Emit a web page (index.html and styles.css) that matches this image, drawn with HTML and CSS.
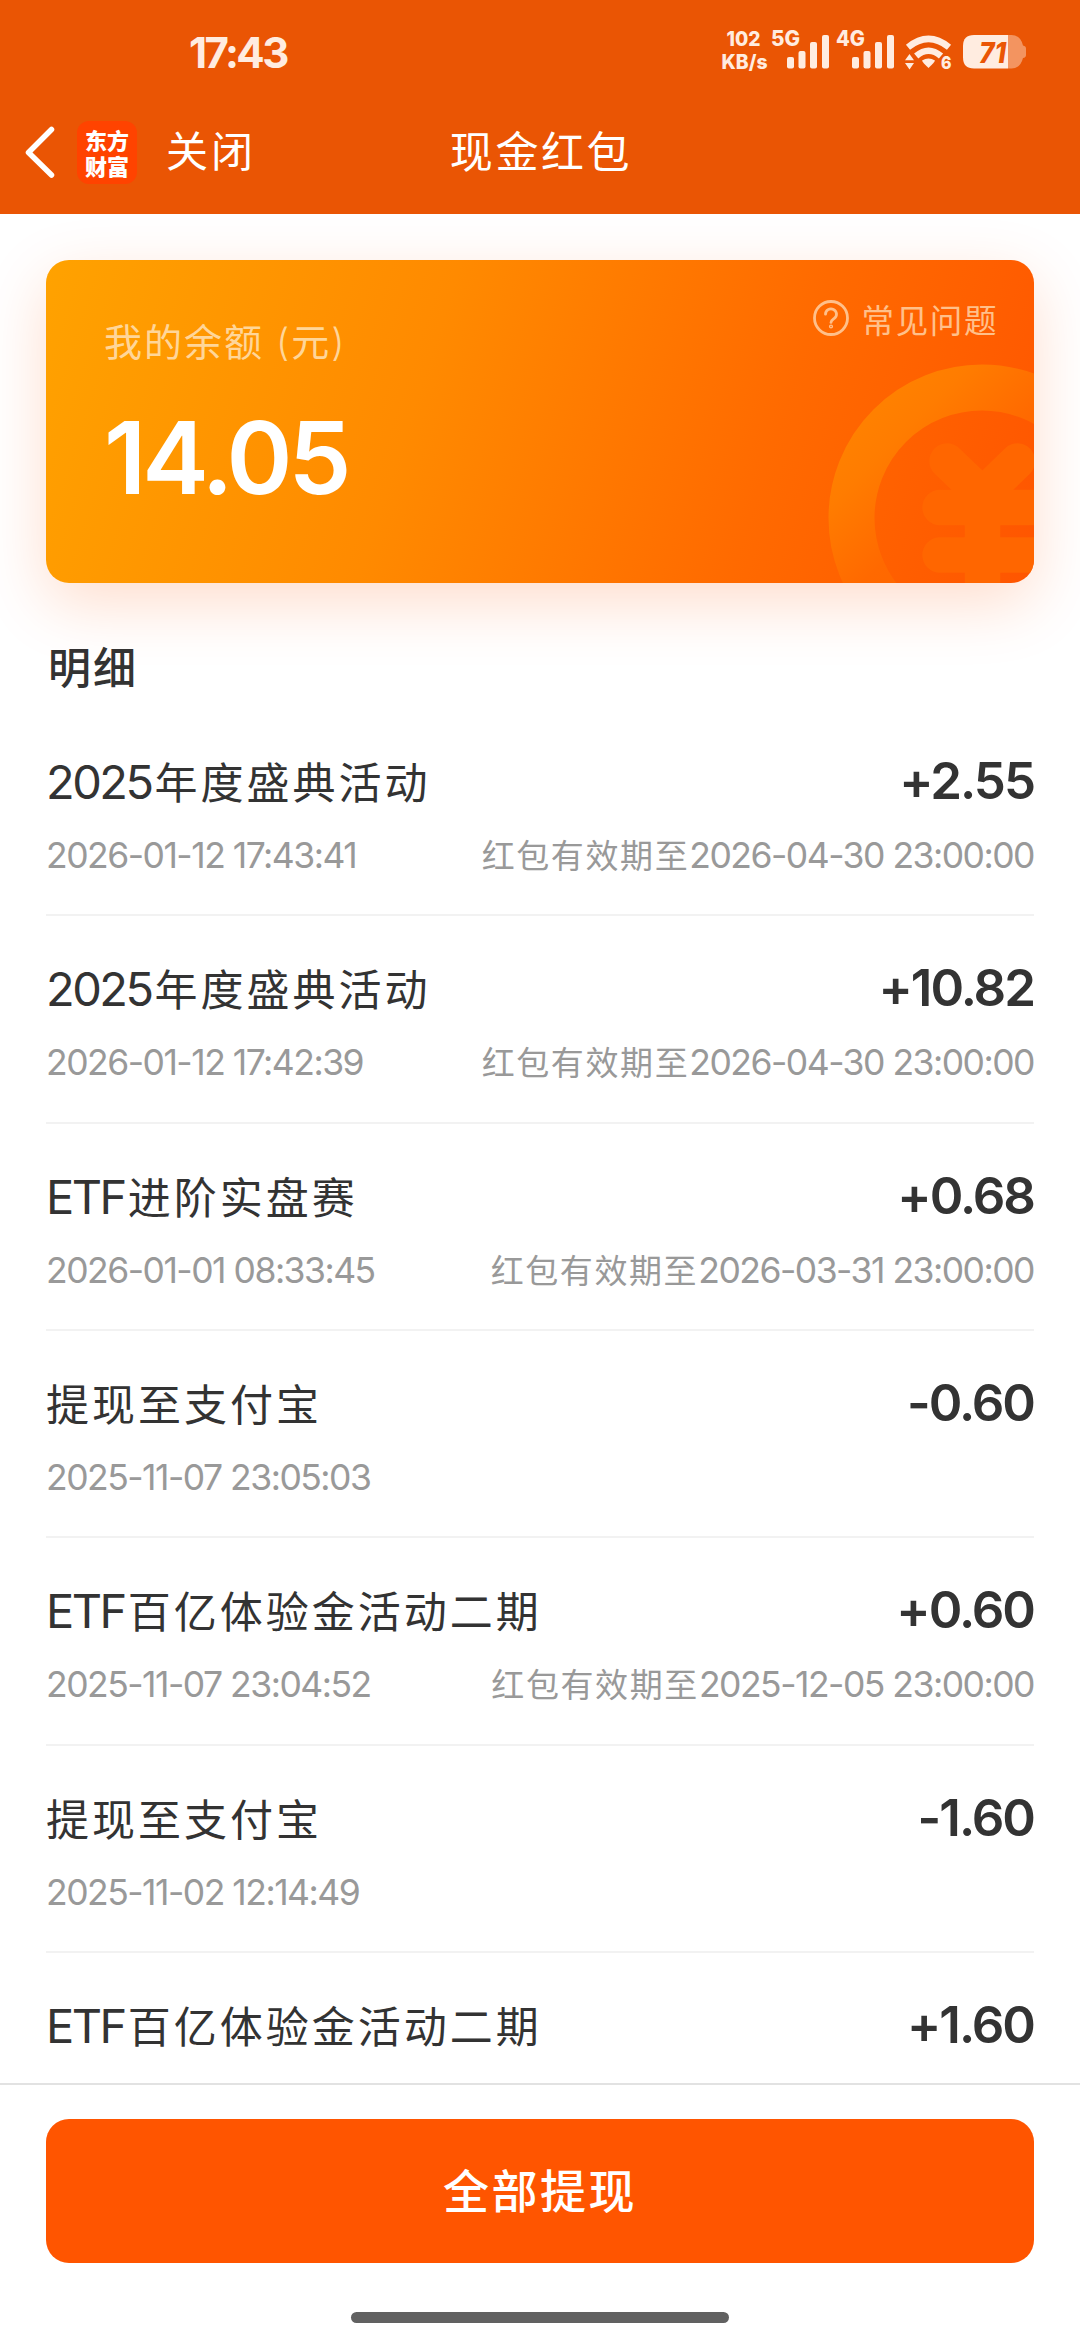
FILE: index.html
```html
<!DOCTYPE html>
<html lang="zh-CN">
<head>
<meta charset="utf-8">
<title>现金红包</title>
<link rel="stylesheet" href="styles.css">
</head>
<body>
<div class="screen">
  <header class="top">
    <div class="status">
      <span class="clock">17:43</span>
      <svg class="indicators" width="310" height="44" viewBox="720 30 310 44" fill="#ffece0">
        <g class="ind-text">
          <text x="726.5" y="46" font-size="20.5" textLength="34" lengthAdjust="spacingAndGlyphs">102</text>
          <text x="721.5" y="69" font-size="19.5" textLength="46" lengthAdjust="spacingAndGlyphs">KB/s</text>
          <text x="771" y="46" font-size="21" textLength="29" lengthAdjust="spacingAndGlyphs">5G</text>
          <text x="836" y="46" font-size="21" textLength="29" lengthAdjust="spacingAndGlyphs">4G</text>
          <text x="941" y="69" font-size="18" textLength="10.5" lengthAdjust="spacingAndGlyphs">6</text>
        </g>
        <g id="bars">
          <rect x="787" y="57" width="7" height="11.5" rx="2"/>
          <rect x="798.5" y="51" width="7" height="17.5" rx="2"/>
          <rect x="810" y="42" width="7" height="26.5" rx="2"/>
          <rect x="822" y="35" width="7" height="33.5" rx="2"/>
        </g>
        <use href="#bars" x="65"/>
        <g fill="none" stroke="#ffece0" stroke-width="6.5">
          <path d="M908 47.2Q928.500 30.500 949 47.200"/>
          <path d="M916.200 56Q928.500 45.500 941 56"/>
        </g>
        <path d="M922 60.500q6.500-4 13 0q-.2 1.500-6.500 7.500q-6.300-6-6.500-7.500z"/>
        <path d="M909.500 54l4.500 6.300h-9zM909.500 69.500l4.500-6.500h-9z"/>
        <path d="M974 35h34v33.500h-34q-11 0-11-11v-11.500q0-11 11-11z"/>
        <path d="M1008 35h3.500q9 0 11.500 10.500q3 .5 3 3v6.500q0 2.500-3 3q-2.500 10.500-11.500 10.500h-3.500z" opacity=".42"/>
        <text class="batt" x="979" y="62.500" font-size="28" textLength="27" lengthAdjust="spacingAndGlyphs">71</text>
      </svg>
    </div>
    <nav class="nav">
      <div class="nav-left">
        <svg class="back" width="32" height="54" viewBox="0 0 32 54" fill="none" stroke="#fff" stroke-width="5.500" stroke-linecap="round" stroke-linejoin="round"><path d="M27.500 4.500L4.500 27.500L27.500 50"/></svg>
        <div class="logo"><span>东方</span><span>财富</span></div>
        <span class="close">关闭</span>
      </div>
      <h1 class="title">现金红包</h1>
      <div></div>
    </nav>
  </header>

  <main class="content">
    <section class="card">
      <svg class="coin" width="206" height="219" viewBox="828 364 206 219">
        <defs>
          <linearGradient id="ring" gradientUnits="userSpaceOnUse" x1="880" y1="410" x2="1010" y2="540">
            <stop offset="0" stop-color="#ff8000"/>
            <stop offset=".18" stop-color="#ff7c00"/>
            <stop offset=".6" stop-color="#ff6900"/>
            <stop offset="1" stop-color="#ff6400"/>
          </linearGradient>
        </defs>
        <circle cx="982" cy="518" r="130.500" fill="none" stroke="url(#ring)" stroke-width="46"/>
        <path d="M947 461l35.500 34l35-34M982.500 495v100M940 507.500h110M940 555h110" fill="none" stroke="#ff6600" stroke-width="35.500" stroke-linecap="round"/>
      </svg>
      <div class="balance">
        <div class="label">我的余额<span class="paren open">(</span>元<span class="paren">)</span></div>
        <div class="sum">14.05</div>
      </div>
      <a class="faq">
        <svg width="38" height="38" viewBox="0 0 38 38" fill="none" stroke="#ffc08a" stroke-width="2.800" stroke-linecap="round"><circle cx="19" cy="19" r="16.500"/><path d="M13.500 15.200a5.500 5.300 0 1 1 8.800 4.200c-2 1.500-3.300 2-3.300 4"/><circle cx="19" cy="27.500" r=".7"/></svg>
        <span>常见问题</span>
      </a>
    </section>

    <h2 class="heading">明细</h2>
    <ul class="list">
      <li><div class="line"><span class="name"><b>2025</b>年度盛典活动</span><span class="amount">+2.55</span></div><div class="meta"><b>2026-01-12 17:43:41</b><span>红包有效期至<b>2026-04-30 23:00:00</b></span></div></li>
      <li><div class="line"><span class="name"><b>2025</b>年度盛典活动</span><span class="amount">+10.82</span></div><div class="meta"><b>2026-01-12 17:42:39</b><span>红包有效期至<b>2026-04-30 23:00:00</b></span></div></li>
      <li><div class="line"><span class="name"><b>ETF</b>进阶实盘赛</span><span class="amount">+0.68</span></div><div class="meta"><b>2026-01-01 08:33:45</b><span>红包有效期至<b>2026-03-31 23:00:00</b></span></div></li>
      <li><div class="line"><span class="name">提现至支付宝</span><span class="amount">-0.60</span></div><div class="meta"><b>2025-11-07 23:05:03</b></div></li>
      <li><div class="line"><span class="name"><b>ETF</b>百亿体验金活动二期</span><span class="amount">+0.60</span></div><div class="meta"><b>2025-11-07 23:04:52</b><span>红包有效期至<b>2025-12-05 23:00:00</b></span></div></li>
      <li><div class="line"><span class="name">提现至支付宝</span><span class="amount">-1.60</span></div><div class="meta"><b>2025-11-02 12:14:49</b></div></li>
      <li><div class="line"><span class="name"><b>ETF</b>百亿体验金活动二期</span><span class="amount">+1.60</span></div></li>
    </ul>
  </main>

  <footer class="bottom">
    <button class="withdraw">全部提现</button>
    <div class="home"></div>
  </footer>
</div>
</body>
</html>
```
FILE: styles.css
```css
* { box-sizing: border-box; margin: 0; padding: 0; }
body { background: #fff; font-family: Inter, "Noto Sans CJK SC", sans-serif; color: #333; }
.screen { width: 1080px; height: 2340px; display: flex; flex-direction: column; overflow: hidden; }

.top { flex: none; height: 214px; background: #ea5504; color: #fff; position: relative; z-index: 1; }
.status { height: 104px; padding: 30px 50px 0 189px; display: flex; justify-content: space-between; }
.clock { font-size: 42px; line-height: 45px; font-weight: 700; letter-spacing: -2.6px; color: #ffece0; }
.indicators { display: block; }
.ind-text { font-weight: 800; }
.batt { font-weight: 800; font-style: italic; fill: #ea5504; }
.nav { height: 96px; display: grid; grid-template-columns: 1fr auto 1fr; align-items: center; }
.nav-left { display: flex; align-items: center; padding-left: 24px; }
.logo { width: 60px; height: 63px; margin-left: 21px; border-radius: 12px; background: #ff4300; display: flex; flex-direction: column; justify-content: center; font: 900 22px/26px "Noto Sans CJK SC", sans-serif; text-align: center; }
.close { margin-left: 29px; font-size: 42px; line-height: 60px; letter-spacing: 3px; }
.title { font-size: 43px; font-weight: 400; line-height: 60px; letter-spacing: 2.6px; margin-right: -2px; }

.content { flex: 1; min-height: 0; overflow: hidden; padding: 46px 46px 0; }
.card { height: 323px; border-radius: 23px; display: flex; justify-content: space-between; position: relative; background: linear-gradient(108deg, #ffa200 0%, #ff8a00 38%, #ff6a00 72%, #ff5500 100%); box-shadow: 0 20px 64px rgba(255, 85, 0, .2); }
.coin { position: absolute; right: 0; bottom: 0; border-radius: 0 0 23px 0; }
.balance { padding: 57px 0 0 58px; }
.label { font-size: 38px; line-height: 50px; letter-spacing: 2px; color: #ffd699; white-space: nowrap; }
.paren { font-weight: 300; }
.open { margin-left: 12px; }
.sum { margin-top: 30px; font-size: 100px; line-height: 122px; font-weight: 600; letter-spacing: -4px; color: #fff; }
.faq { position: relative; height: 48px; margin: 34px 36px 0 0; display: flex; align-items: center; gap: 12px; font-size: 32.500px; letter-spacing: 1.600px; color: #ffc08a; }

.heading { margin-top: 55px; font-size: 43px; line-height: 60px; font-weight: 500; letter-spacing: 2px; padding-left: 2px; }
.list { list-style: none; margin-top: 11px; }
.list li { height: 207.330px; padding-top: 43px; border-bottom: 2px solid #f2f2f2; }
.line, .meta { display: flex; justify-content: space-between; align-items: baseline; white-space: nowrap; }
.line { height: 58px; line-height: 58px; }
.name { font-size: 43px; letter-spacing: 3px; }
.name b { font-size: 47px; font-weight: 400; letter-spacing: -2.500px; margin-right: 3px; }
.amount { font-size: 51px; font-weight: 600; letter-spacing: -2px; }
.meta { margin-top: 26px; height: 40px; line-height: 40px; font-size: 33px; letter-spacing: 1.600px; color: #999; }
.meta b { font-size: 35.500px; font-weight: 400; letter-spacing: -1.500px; }

.bottom { flex: none; height: 257px; border-top: 2px solid #e2e2e2; background: #fff; padding: 34px 46px 0; display: flex; flex-direction: column; align-items: center; }
.withdraw { width: 100%; height: 144px; border: 0; border-radius: 23px; background: #ff5500; color: #fff; font: 500 46px/60px Inter, "Noto Sans CJK SC", sans-serif; letter-spacing: 2.500px; }
.home { width: 378px; height: 11px; margin-top: 49px; border-radius: 6px; background: #616161; }
```
